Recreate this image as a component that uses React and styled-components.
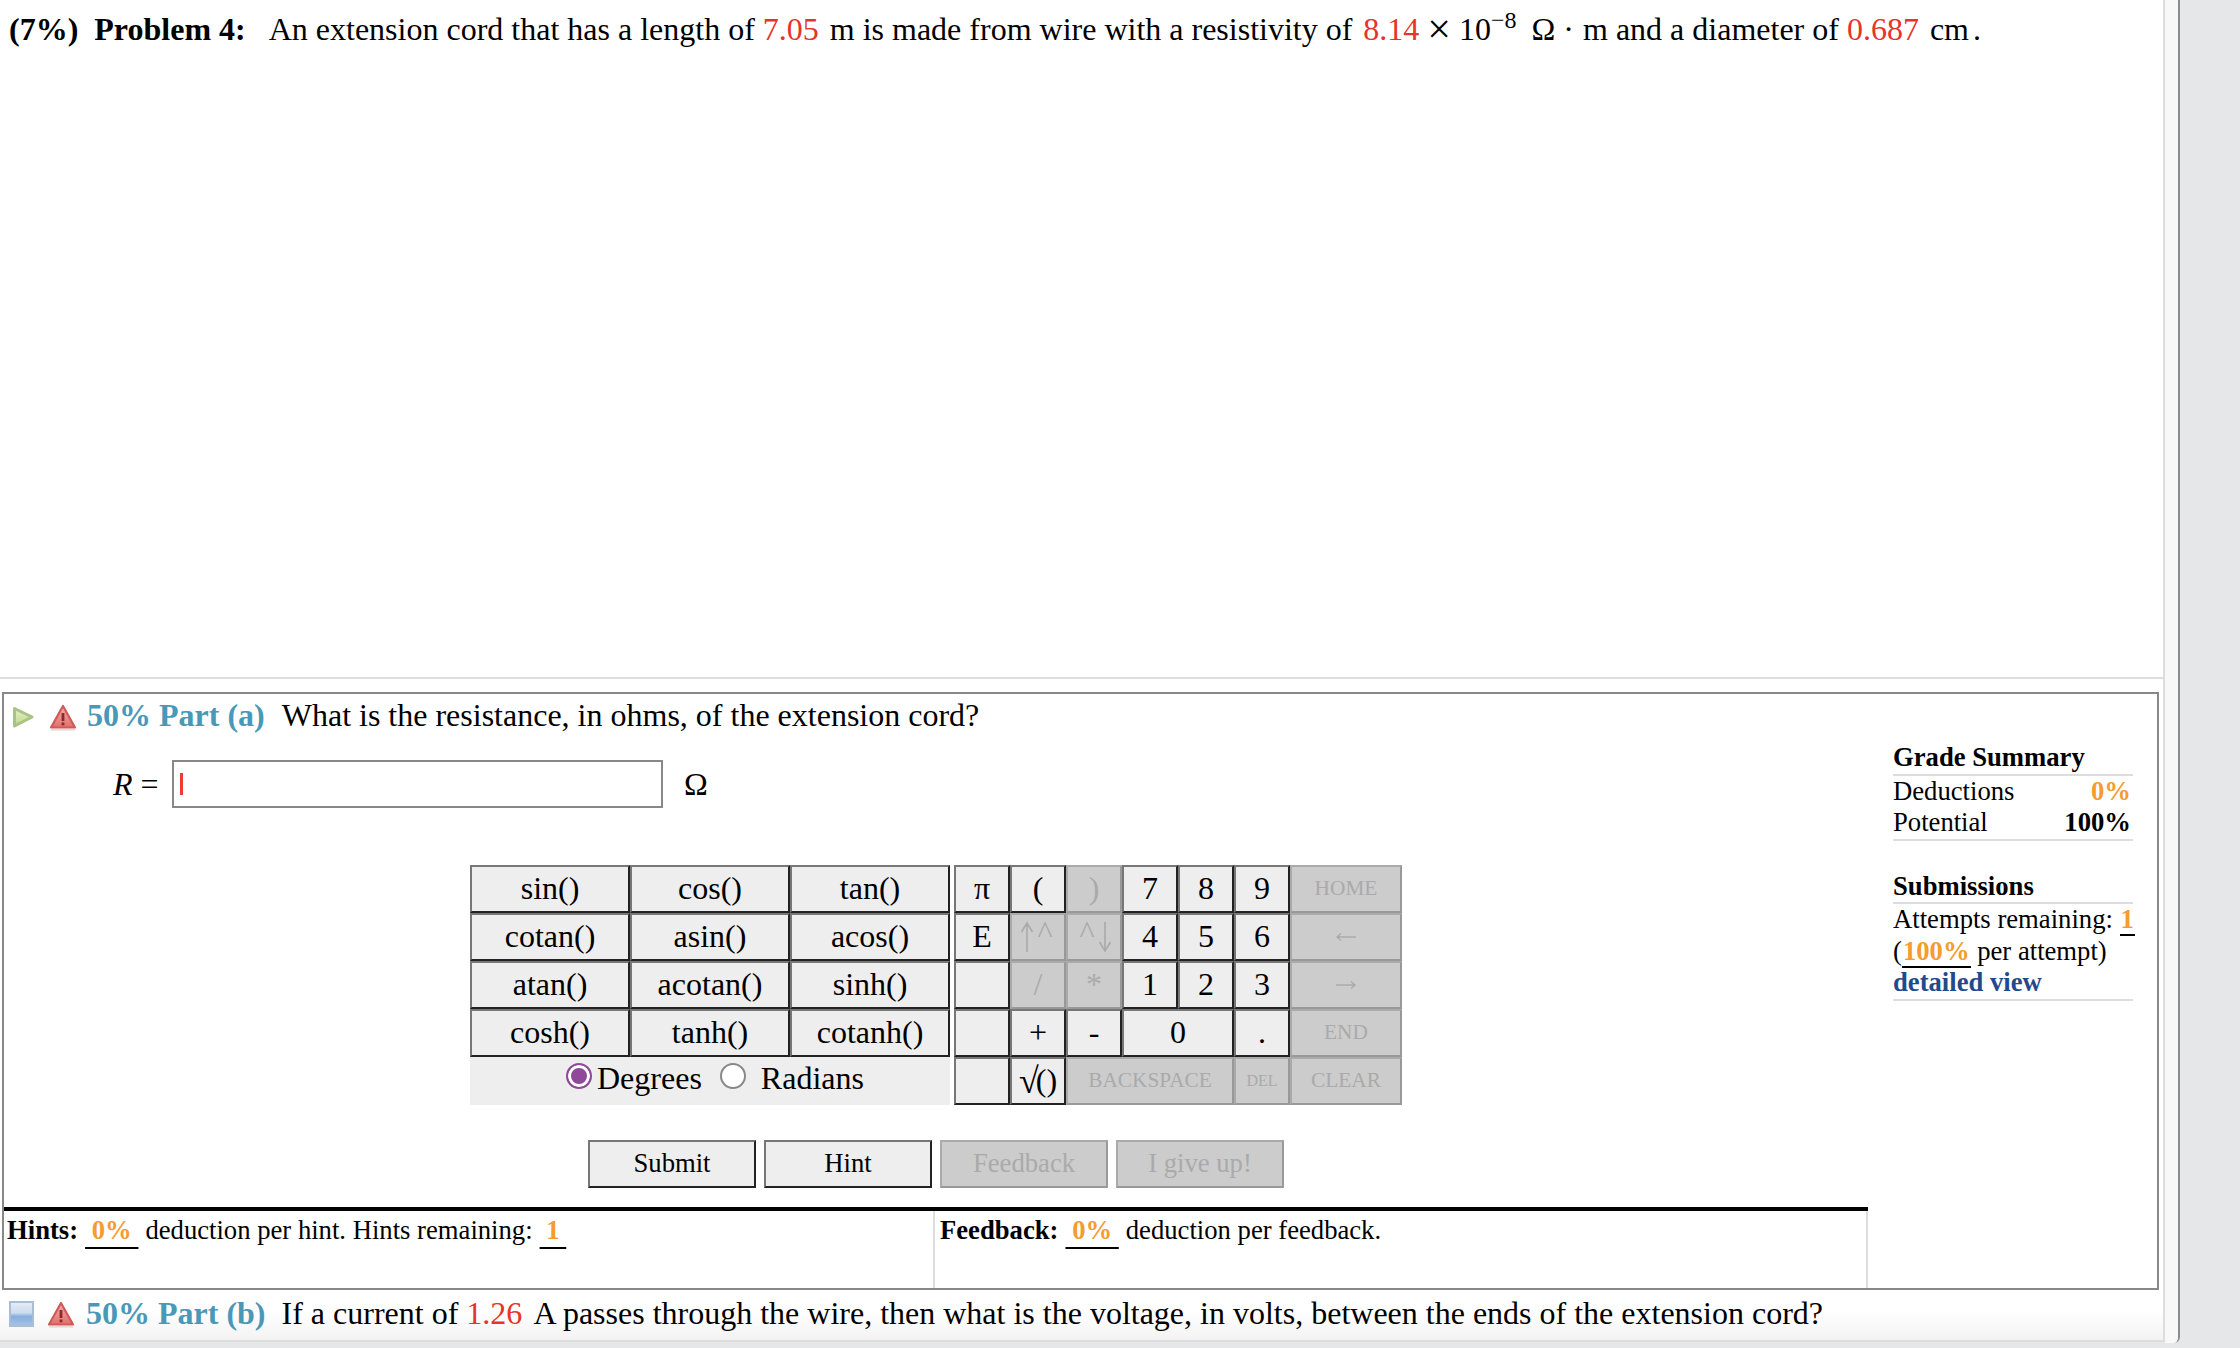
import React from "react";
import styled, { createGlobalStyle } from "styled-components";

const GlobalStyle = createGlobalStyle`
  html, body {
    margin: 0;
    padding: 0;
    background: #e6e7e9;
    overflow: hidden;
  }
  body {
    font-family: "Liberation Serif", "Times New Roman", serif;
    color: #000;
  }
`;

const Caretish = styled.span`
  margin: 0 3px 8px;
`;

const Root = styled.span`
  font-size: 36px;
  margin-right: -3px;
`;

const PlayIcon = () => (
  <svg width="24" height="24" viewBox="0 0 24 24">
    <defs>
      <linearGradient id="playFill" x1="0" y1="0" x2="0" y2="1">
        <stop offset="0" stopColor="#e6f0c8" />
        <stop offset="1" stopColor="#bcd98c" />
      </linearGradient>
    </defs>
    <path d="M3.5 3.5 L21 12 L3.5 21 Z" fill="url(#playFill)" stroke="#a9c482" strokeWidth="3" strokeLinejoin="round" />
  </svg>
);

const WarningIcon = ({ id }) => (
  <svg width="28" height="28" viewBox="0 0 28 28">
    <defs>
      <linearGradient id={id} x1="0" y1="0" x2="0" y2="1">
        <stop offset="0" stopColor="#f0b0ae" />
        <stop offset="1" stopColor="#e26f6c" />
      </linearGradient>
    </defs>
    <path d="M14 3 L26 24.5 L2 24.5 Z" fill={`url(#${id})`} stroke="#cf5a58" strokeWidth="2.2" strokeLinejoin="round" />
    <rect x="12.6" y="10" width="2.8" height="8" fill="#8f2a28" />
    <rect x="12.6" y="19.5" width="2.8" height="2.8" fill="#8f2a28" />
    <rect x="2" y="26" width="24" height="1.6" fill="#e9d6d5" />
  </svg>
);

const FormIcon = () => (
  <svg width="25" height="26" viewBox="0 0 25 26">
    <defs>
      <linearGradient id="formFill" x1="0" y1="0" x2="0" y2="1">
        <stop offset="0" stopColor="#e6edf6" />
        <stop offset="0.45" stopColor="#cddcee" />
        <stop offset="0.6" stopColor="#86aede" />
        <stop offset="1" stopColor="#a7c3e6" />
      </linearGradient>
    </defs>
    <rect x="1" y="1" width="23" height="24" fill="url(#formFill)" stroke="#a9bdd5" strokeWidth="2" />
  </svg>
);

const TallArrow = ({ down }) => (
  <svg width="14" height="32" viewBox="0 0 14 32" fill="none" stroke="#aaa" strokeWidth="1.6">
    {down ? (
      <path d="M7 1 V30 M1.5 21 L7 30 L12.5 21" />
    ) : (
      <path d="M7 31 V2 M1.5 11 L7 2 L12.5 11" />
    )}
  </svg>
);

const WideArrow = ({ left }) => (
  <svg width="20" height="10" viewBox="0 0 20 10" fill="none" stroke="#aaa" strokeWidth="1.3">
    {left ? (
      <path d="M20 5 H1 M5 1.5 L1 5 L5 8.5" />
    ) : (
      <path d="M0 5 H19 M15 1.5 L19 5 L15 8.5" />
    )}
  </svg>
);

const funcKeys = [
  "sin()", "cos()", "tan()",
  "cotan()", "asin()", "acos()",
  "atan()", "acotan()", "sinh()",
  "cosh()", "tanh()", "cotanh()",
];

const padKeys = [
  { label: "π" }, { label: "(" }, { label: ")", off: true },
  { label: "7" }, { label: "8" }, { label: "9" }, { label: "HOME", off: true, small: true },
  { label: "E" },
  { label: <><TallArrow /><Caretish>^</Caretish></>, off: true },
  { label: <><Caretish>^</Caretish><TallArrow down /></>, off: true },
  { label: "4" }, { label: "5" }, { label: "6" },
  { label: <WideArrow left />, off: true, small: true },
  { label: "" }, { label: "/", off: true }, { label: "*", off: true },
  { label: "1" }, { label: "2" }, { label: "3" },
  { label: <WideArrow />, off: true, small: true },
  { label: "" }, { label: "+" }, { label: "-" },
  { label: "0", span: 2 }, { label: "." }, { label: "END", off: true, small: true },
  { label: "" }, { label: <><Root>√</Root>()</> },
  { label: "BACKSPACE", off: true, small: true, span: 3 },
  { label: "DEL", off: true, tiny: true }, { label: "CLEAR", off: true, small: true },
];

const App = () => {
  return (
    <Page>
      <GlobalStyle />
      <Sheet>
        <Content>
          <Statement>
            <b>(7%)</b>
            <ProblemLabel>Problem 4:</ProblemLabel>
            An extension cord that has a length of <Given $after="3px">7.05</Given> m is made from wire with a
            resistivity of <Given $before="3px">8.14</Given>
            <Times>×</Times>10<Sup>−8</Sup>
            <Ohm>Ω</Ohm>
            <Dot>·</Dot>m and a diameter of <Given $after="3px">0.687</Given> cm<Period>.</Period>
          </Statement>

          <PartBox>
            <PartMain>
              <PartRow>
                <IconSlot><PlayIcon /></IconSlot>
                <WarnSlot><WarningIcon id="warnA" /></WarnSlot>
                <PartTag>50% Part (a)</PartTag>
                <PartText>What is the resistance, in ohms, of the extension cord?</PartText>
              </PartRow>

              <AnswerRow>
                <AnswerLabel><i>R</i> =</AnswerLabel>
                <AnswerField><Caret /></AnswerField>
                <AnswerUnit>Ω</AnswerUnit>
              </AnswerRow>

              <Keyboard>
                <FuncPanel>
                  <FuncGrid>
                    {funcKeys.map((k) => (
                      <Key key={k}>{k}</Key>
                    ))}
                  </FuncGrid>
                  <AngleRow>
                    <Radio $checked />
                    <AngleLabel>Degrees</AngleLabel>
                    <Radio />
                    <AngleLabel>Radians</AngleLabel>
                  </AngleRow>
                </FuncPanel>
                <PadGrid>
                  {padKeys.map((k, i) => (
                    <Key key={i} $off={k.off} $small={k.small} $tiny={k.tiny} $span={k.span}>
                      {k.label}
                    </Key>
                  ))}
                </PadGrid>
              </Keyboard>

              <ActionRow>
                <ActionButton>Submit</ActionButton>
                <ActionButton>Hint</ActionButton>
                <ActionButton $off>Feedback</ActionButton>
                <ActionButton $off>I give up!</ActionButton>
              </ActionRow>

              <InfoRow>
                <InfoCell>
                  <b>Hints:</b>
                  <Rated> 0% </Rated>
                  deduction per hint. Hints remaining:
                  <Rated> 1 </Rated>
                </InfoCell>
                <InfoCell $last>
                  <b>Feedback:</b>
                  <Rated> 0% </Rated>
                  deduction per feedback.
                </InfoCell>
              </InfoRow>
            </PartMain>

            <Sidebar>
              <SideTitle>Grade Summary</SideTitle>
              <SideBlock>
                <SideLine>
                  <span>Deductions</span>
                  <Orange>0%</Orange>
                </SideLine>
                <SideLine>
                  <span>Potential</span>
                  <b>100%</b>
                </SideLine>
              </SideBlock>
              <SideTitle $gap>Submissions</SideTitle>
              <SideBlock>
                <SideText>
                  Attempts remaining: <SideRated>1</SideRated>
                </SideText>
                <SideText>
                  (<SideRated>100%</SideRated> per attempt)
                </SideText>
                <DetailLink>detailed view</DetailLink>
              </SideBlock>
            </Sidebar>
          </PartBox>

          <NextPart>
            <IconSlot><FormIcon /></IconSlot>
            <WarnSlot><WarningIcon id="warnB" /></WarnSlot>
            <PartTag $next>50% Part (b)</PartTag>
            <PartText $next>
              If a current of <Given $after="5px">1.26</Given> A passes through the wire, then what is the
              voltage, in volts, between the ends of the extension cord?
            </PartText>
          </NextPart>
        </Content>
        <Track />
      </Sheet>
    </Page>
  );
};

export default App;

const Page = styled.div`
  width: 2240px;
  height: 1348px;
  background: #e6e7e9;
`;

const Sheet = styled.div`
  width: 2180px;
  height: 1343px;
  display: flex;
  border-right: 2px solid #8c8c8c;
  border-bottom-right-radius: 6px;
  box-sizing: border-box;
  overflow: hidden;
`;

const Content = styled.div`
  width: 2165px;
  height: 1342px;
  box-sizing: border-box;
  border-right: 2px solid #ddd;
  border-bottom: 2px solid #ddd;
  background: linear-gradient(#fff 0, #fff 1310px, #f3f3f3 100%);
  display: flex;
  flex-direction: column;
`;

const Track = styled.div`
  flex: 1;
  background: #f8f8f8;
`;

const Statement = styled.div`
  height: 679px;
  box-sizing: border-box;
  padding: 11px 0 0 9px;
  border-bottom: 2px solid #ddd;
  font-size: 32px;
  line-height: 36px;
  white-space: nowrap;
  background: #fff;
`;

const ProblemLabel = styled.b`
  margin: 0 23px 0 16px;
`;

const Given = styled.span`
  color: #e8332a;
  margin-left: ${(p) => p.$before || "0"};
  margin-right: ${(p) => p.$after || "0"};
`;

const Times = styled.span`
  font-size: 42px;
  line-height: 0;
  margin: 0 8px;
  vertical-align: -3px;
`;

const Sup = styled.sup`
  font-size: 24px;
  line-height: 0;
`;

const Ohm = styled.span`
  margin-left: 15px;
`;

const Dot = styled.span`
  margin: 0 9px 0 8px;
`;

const Period = styled.span`
  margin-left: 4px;
`;

const PartBox = styled.div`
  margin: 13px 4px 0 2px;
  height: 598px;
  box-sizing: border-box;
  border: 2px solid #888;
  display: flex;
  background: #fff;
`;

const PartMain = styled.div`
  width: 1864px;
  display: flex;
  flex-direction: column;
`;

const PartRow = styled.div`
  height: 46px;
  padding-left: 7px;
  display: flex;
  align-items: center;
  font-size: 32px;
  white-space: nowrap;
`;

const IconSlot = styled.span`
  width: 38px;
  display: flex;
  align-items: center;
  filter: blur(0.5px);
`;

const WarnSlot = styled.span`
  width: 38px;
  display: flex;
  align-items: center;
  filter: blur(0.5px);
`;

const PartTag = styled.b`
  color: #4a98b8;
  margin-left: ${(p) => (p.$next ? "1px" : "0")};
  margin-right: ${(p) => (p.$next ? "16px" : "17px")};
  margin-bottom: ${(p) => (p.$next ? "2px" : "4px")};
`;

const PartText = styled.span`
  margin-bottom: ${(p) => (p.$next ? "2px" : "4px")};
`;

const AnswerRow = styled.div`
  margin-top: 20px;
  height: 48px;
  display: flex;
  align-items: center;
  padding-left: 109px;
  font-size: 32px;
`;

const AnswerLabel = styled.span`
  width: 59px;
  white-space: nowrap;
`;

const AnswerField = styled.div`
  width: 491px;
  height: 48px;
  box-sizing: border-box;
  border: 2px solid #888;
  padding: 11px 0 0 6px;
`;

const Caret = styled.div`
  width: 3px;
  height: 22px;
  background: #ee3c34;
`;

const AnswerUnit = styled.span`
  margin-left: 21px;
`;

const Keyboard = styled.div`
  margin-top: 57px;
  margin-left: 466px;
  display: flex;
  gap: 4px;
`;

const FuncPanel = styled.div`
  width: 480px;
`;

const FuncGrid = styled.div`
  display: grid;
  grid-template-columns: repeat(3, 160px);
  grid-auto-rows: 48px;
`;

const AngleRow = styled.div`
  height: 48px;
  padding-left: 96px;
  box-sizing: border-box;
  background: #eee;
  display: flex;
  align-items: center;
  font-size: 32px;
  white-space: nowrap;
`;

const AngleLabel = styled.span`
  margin: 0 18px 5px 0;
`;

const Radio = styled.span`
  flex: none;
  width: 22px;
  height: 22px;
  border-radius: 50%;
  background: ${(p) => (p.$checked ? "#8e4a98" : "#fff")};
  border: 2px solid ${(p) => (p.$checked ? "#8e4a98" : "#888")};
  box-shadow: ${(p) => (p.$checked ? "inset 0 0 0 3px #fff" : "none")};
  margin: ${(p) => (p.$checked ? "0 5px 10px 0" : "0 15px 10px 0")};
  box-sizing: content-box;
`;

const PadGrid = styled.div`
  display: grid;
  grid-template-columns: repeat(6, 56px) 112px;
  grid-auto-rows: 48px;
`;

const Key = styled.div`
  grid-column: ${(p) => (p.$span ? `span ${p.$span}` : "auto")};
  box-sizing: border-box;
  display: flex;
  align-items: center;
  justify-content: center;
  white-space: nowrap;
  padding-bottom: 1px;
  background: ${(p) => (p.$off ? "#ccc" : "#eee")};
  color: ${(p) => (p.$off ? "#aaa" : "#000")};
  font-size: ${(p) => (p.$tiny ? "16px" : p.$small ? "21.33px" : "32px")};
  border-style: solid;
  border-width: 2px;
  border-color: ${(p) =>
    p.$off ? "#aaa #999 #999 #aaa" : "#777 #222 #222 #777"};
`;

const ActionRow = styled.div`
  margin-top: 35px;
  margin-left: 584px;
  display: flex;
  gap: 8px;
`;

const ActionButton = styled.div`
  width: 168px;
  height: 48px;
  box-sizing: border-box;
  display: flex;
  align-items: center;
  justify-content: center;
  padding-bottom: 2px;
  font-size: 26.67px;
  background: ${(p) => (p.$off ? "#ccc" : "#eee")};
  color: ${(p) => (p.$off ? "#aaa" : "#000")};
  border-style: solid;
  border-width: 2px;
  border-color: ${(p) =>
    p.$off ? "#aaa #999 #999 #aaa" : "#777 #222 #222 #777"};
`;

const InfoRow = styled.div`
  margin-top: 19px;
  flex: 1;
  display: flex;
  border-top: 4px solid #000;
`;

const InfoCell = styled.div`
  width: ${(p) => (p.$last ? "auto" : "931px")};
  flex: ${(p) => (p.$last ? "1" : "none")};
  box-sizing: border-box;
  padding: 3px 0 0 ${(p) => (p.$last ? "5px" : "3px")};
  font-size: 26.67px;
  line-height: 32px;
  white-space: pre-wrap;
  border-right: 2px solid #ddd;
`;

const Rated = styled.span`
  color: #f59c30;
  font-weight: bold;
  text-decoration: underline;
  text-decoration-color: #000;
  text-decoration-thickness: 2px;
  text-underline-offset: 8px;
  margin: 0 7px;
`;

const Sidebar = styled.div`
  width: 240px;
  margin-left: 25px;
  padding-top: 48px;
  font-size: 26.67px;
  line-height: 31.5px;
`;

const SideTitle = styled.div`
  font-weight: bold;
  border-bottom: 2px solid #ddd;
  margin-top: ${(p) => (p.$gap ? "30px" : "0")};
`;

const SideBlock = styled.div`
  border-bottom: 2px solid #ddd;
`;

const SideLine = styled.div`
  display: flex;
  justify-content: space-between;
  padding-right: 2px;
`;

const Orange = styled.b`
  color: #f59c30;
`;

const SideText = styled.div`
  white-space: nowrap;
`;

const SideRated = styled.b`
  color: #f59c30;
  border-bottom: 2px solid #000;
  padding: 0 1px;
`;

const DetailLink = styled.div`
  color: #1f4b8c;
  font-weight: bold;
`;

const NextPart = styled.div`
  margin-top: 6px;
  padding-left: 9px;
  height: 36px;
  display: flex;
  align-items: center;
  font-size: 32px;
  white-space: nowrap;
`;
